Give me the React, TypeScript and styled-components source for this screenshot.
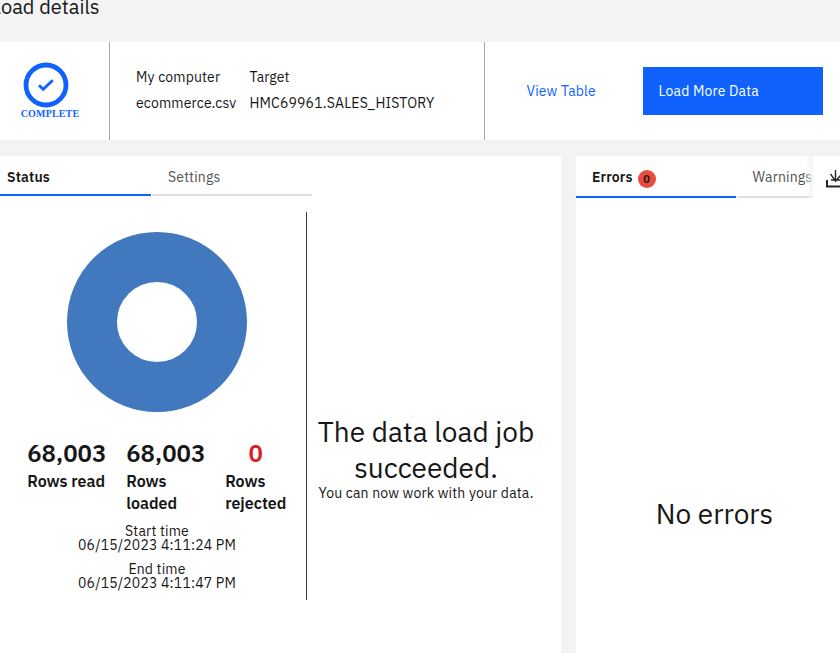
import React from "react";
import styled, { createGlobalStyle } from "styled-components";

const Global = createGlobalStyle`
  * { box-sizing: border-box; }
  html, body { margin: 0; padding: 0; }
  body { background: #f3f3f3; color: #161616; font-family: "IBM Plex Sans", Roboto, "Noto Sans", sans-serif; font-size: 14px; overflow: hidden; }
`;

const Page = styled.div`
  width: 840px;
  height: 653px;
  overflow: hidden;
  display: grid;
  grid-template-rows: 42px 98px 1fr;
`;

const Text = styled.span<{ $size?: number; $line?: number; $weight?: number; $track?: number; $color?: string }>`
  display: block;
  white-space: nowrap;
  font-size: ${(p) => p.$size ?? 14}px;
  line-height: ${(p) => p.$line ?? 18}px;
  font-weight: ${(p) => p.$weight ?? 400};
  letter-spacing: ${(p) => p.$track ?? 0.16}px;
  color: ${(p) => p.$color ?? "inherit"};
`;

const PageHeader = styled.header`
  margin: -6px 0 0 -4.5px;
`;

const Summary = styled.section`
  display: flex;
  background: #fff;
`;

const StateCell = styled.div`
  width: 110px;
  border-right: 1px solid #a8a8a8;
  padding: 20px 17px 0 0;
  display: flex;
  flex-direction: column;
  align-items: center;
`;

const StateLabel = styled.span`
  font: 700 10px/12px "Liberation Serif", serif;
  letter-spacing: 0.16px;
  color: #0f62fe;
  margin: 0 -8px 0 0;
`;

const RouteCell = styled.div`
  width: 375px;
  border-right: 1px solid #a8a8a8;
  padding: 26px 0 0 26px;
  display: grid;
  grid-template-columns: 113.5px 1fr;
  grid-auto-rows: 26px;
`;

const Actions = styled.div`
  flex: 1;
  display: flex;
  align-items: center;
  padding-left: 41.5px;
`;

const LinkButton = styled.a`
  width: 116.5px;
  color: #0f62fe;
`;

const PrimaryButton = styled.button`
  width: 180px;
  height: 48px;
  border: 0;
  padding: 0 15.5px;
  background: #0f62fe;
  color: #fff;
  font-family: inherit;
  text-align: left;
`;

const Panels = styled.main`
  margin-top: 16px;
  display: grid;
  grid-template-columns: 561px 264px;
  column-gap: 15px;
  min-height: 0;
`;

const Panel = styled.section`
  background: #fff;
  display: flex;
  flex-direction: column;
  min-width: 0;
`;

const TabBar = styled.div<{ $height: number }>`
  display: flex;
  flex: none;
  gap: 1px;
  height: ${(p) => p.$height}px;
`;

const Tab = styled.div<{ $width: number; $inset: number; $active?: boolean }>`
  width: ${(p) => p.$width}px;
  flex: none;
  padding: 12px 0 0 ${(p) => p.$inset}px;
  display: flex;
  align-items: flex-start;
  gap: 5px;
  border-bottom: 2px solid ${(p) => (p.$active ? "#0f62fe" : "#e0e0e0")};
  color: ${(p) => (p.$active ? "#161616" : "#525252")};
`;

const ScrollTabs = styled.div`
  position: relative;
  width: 237px;
  overflow: hidden;
  &::after {
    content: "";
    position: absolute;
    top: 0;
    right: 0;
    width: 8px;
    height: 100%;
    background: linear-gradient(to right, rgba(243, 243, 243, 0), rgba(243, 243, 243, 0.9));
  }
`;

const ErrorBar = styled.div`
  display: flex;
  height: 42px;
`;

const DownloadCell = styled.div`
  padding: 13px 0 0 12.5px;
  overflow: hidden;
  width: 27px;
`;

const Badge = styled.span`
  width: 18px;
  height: 18px;
  margin-top: 2px;
  border-radius: 50%;
  background: #e74c3c;
  color: #161616;
  font-size: 11px;
  font-weight: 600;
  line-height: 18px;
  text-align: center;
`;

const StatusBody = styled.div`
  display: flex;
  margin-top: 16px;
  height: 388px;
`;

const Metrics = styled.div`
  width: 307px;
  border-right: 1px solid #393939;
  padding-top: 20px;
  display: flex;
  flex-direction: column;
`;

const ChartWrap = styled.div`
  padding-left: 67px;
  height: 180px;
`;

const Counters = styled.div`
  display: grid;
  grid-template-columns: 79px 79px 61px;
  column-gap: 20px;
  margin: 26px 0 0 27.3px;
  height: 86px;
`;

const Counter = styled.div`
  display: flex;
  flex-direction: column;
  align-items: center;
`;

const CounterLabel = styled.div`
  margin-top: 2px;
  min-width: 100%;
`;

const TimeBlock = styled.div`
  width: 314px;
  height: 38px;
  display: flex;
  flex-direction: column;
  align-items: center;
`;

const Outcome = styled.div`
  width: 238px;
  padding-top: 202px;
  display: flex;
  flex-direction: column;
  align-items: center;
`;

const EmptyState = styled.div`
  flex: 1;
  display: flex;
  justify-content: center;
  padding: 298px 0 0 13px;
`;

const CompleteIcon = () => (
  <svg width="46" height="46" viewBox="0 0 46 46" fill="none" stroke="#0f62fe">
    <circle cx="23" cy="23" r="20" strokeWidth="4.8" />
    <path d="M16 23.3 20.2 27.3 29.8 18.2" strokeWidth="2.8" />
  </svg>
);

const DownloadIcon = () => (
  <svg width="20" height="22" viewBox="0 0 20 22" fill="none" stroke="#262626">
    <path d="M9.5 1v12M4.5 5l5 7 5.5-6M5 11h9" strokeWidth="1.4" />
    <path d="M1 11v6.5h17V11" strokeWidth="2" />
  </svg>
);

const Donut = () => (
  <svg width="180" height="180" viewBox="0 0 180 180">
    <circle cx="90" cy="90" r="65" fill="none" stroke="#4178be" strokeWidth="50" />
  </svg>
);

const counters = [
  { value: "68,003", label: ["Rows read"], color: "#161616" },
  { value: "68,003", label: ["Rows", "loaded"], color: "#161616" },
  { value: "0", label: ["Rows", "rejected"], color: "#da1e28" },
];

const times = [
  { label: "Start time", value: "06/15/2023 4:11:24 PM" },
  { label: "End time", value: "06/15/2023 4:11:47 PM" },
];

export default function App() {
  return (
    <>
      <Global />
      <Page>
        <PageHeader><Text $size={20} $line={26} $track={0}>load details</Text></PageHeader>
        <Summary>
          <StateCell>
            <CompleteIcon />
            <StateLabel>COMPLETE</StateLabel>
          </StateCell>
          <RouteCell>
            <Text>My computer</Text>
            <Text>Target</Text>
            <Text>ecommerce.csv</Text>
            <Text>HMC69961.SALES_HISTORY</Text>
          </RouteCell>
          <Actions>
            <LinkButton><Text>View Table</Text></LinkButton>
            <PrimaryButton><Text>Load More Data</Text></PrimaryButton>
          </Actions>
        </Summary>
        <Panels>
          <Panel>
            <TabBar $height={40}>
              <Tab $width={151} $inset={7} $active><Text $weight={600}>Status</Text></Tab>
              <Tab $width={160} $inset={16}><Text>Settings</Text></Tab>
            </TabBar>
            <StatusBody>
              <Metrics>
                <ChartWrap><Donut /></ChartWrap>
                <Counters>
                  {counters.map((c) => (
                    <Counter key={c.label.join(" ")}>
                      <Text $size={24} $line={30} $weight={600} $track={0} $color={c.color}>{c.value}</Text>
                      <CounterLabel>
                        {c.label.map((l) => <Text key={l} $size={16} $line={22} $weight={600} $track={0}>{l}</Text>)}
                      </CounterLabel>
                    </Counter>
                  ))}
                </Counters>
                {times.map((t) => (
                  <TimeBlock key={t.label}>
                    <Text $line={14}>{t.label}</Text>
                    <Text $line={14}>{t.value}</Text>
                  </TimeBlock>
                ))}
              </Metrics>
              <Outcome>
                <Text $size={28} $line={36} $track={0}>The data load job</Text>
                <Text $size={28} $line={36} $track={0}>succeeded.</Text>
                <Text $line={14}>You can now work with your data.</Text>
              </Outcome>
            </StatusBody>
          </Panel>
          <Panel>
            <ErrorBar>
              <ScrollTabs>
                <TabBar $height={42}>
                  <Tab $width={160} $inset={16} $active>
                    <Text $weight={600}>Errors</Text>
                    <Badge>0</Badge>
                  </Tab>
                  <Tab $width={160} $inset={15.5}><Text>Warnings</Text></Tab>
                </TabBar>
              </ScrollTabs>
              <DownloadCell><DownloadIcon /></DownloadCell>
            </ErrorBar>
            <EmptyState><Text $size={28} $line={36} $track={0}>No errors</Text></EmptyState>
          </Panel>
        </Panels>
      </Page>
    </>
  );
}
